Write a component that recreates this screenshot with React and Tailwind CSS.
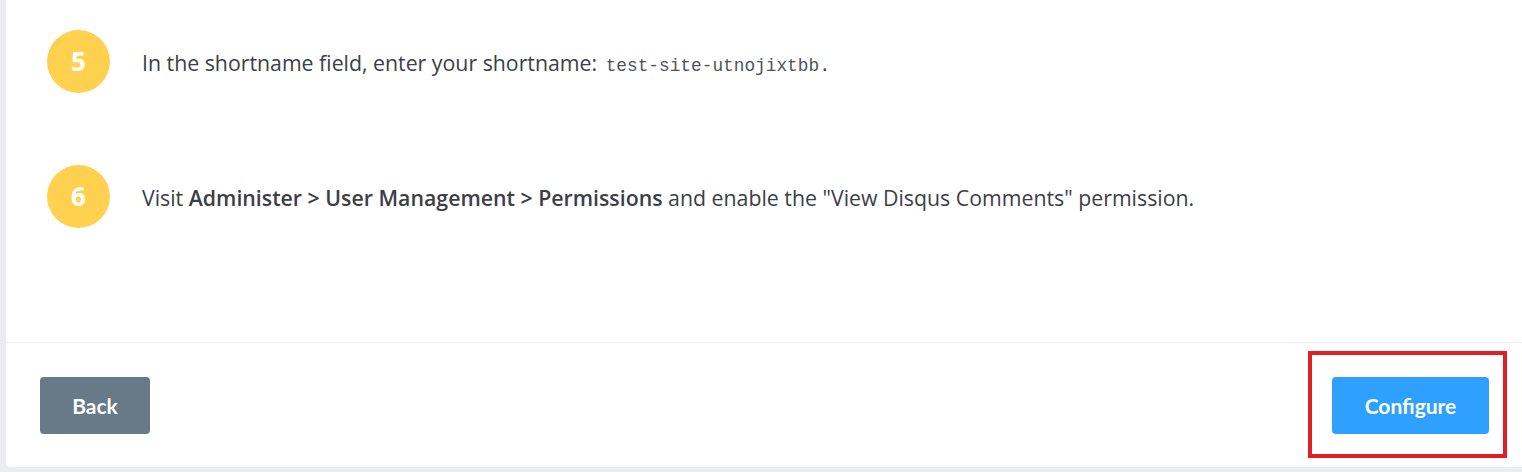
export default function App() {
  const font = { fontFamily: "'Open Sans', Lato, sans-serif" };
  return (
    <div className="relative h-[472px] w-[1522px] overflow-hidden bg-[#e9ecf0] pl-[6px]" style={font}>
      <div className="flex h-[467px] flex-col rounded-bl-[4px] bg-white">
        <div className="flex flex-col gap-[72px] pl-[41px] pt-[30px] pb-[114px]">
          <div className="flex items-center gap-[32px]">
            <div className="flex h-[63px] w-[63px] shrink-0 items-center justify-center rounded-full bg-[#ffd14f] text-[26px] font-bold text-white">5</div>
            <p className="pt-[3px] text-[21.3px] text-[#3c4046]">
              In the shortname field, enter your shortname:{" "}
              <code className="px-[3px] text-[17.8px] text-[#505459]" style={{ fontFamily: "'Liberation Mono', monospace" }}>test-site-utnojixtbb</code>.
            </p>
          </div>
          <div className="flex items-center gap-[32px]">
            <div className="flex h-[63px] w-[63px] shrink-0 items-center justify-center rounded-full bg-[#ffd14f] text-[26px] font-bold text-white">6</div>
            <p className="pt-[2px] text-[21.3px] text-[#3c4046]">
              Visit <b className="font-semibold">Administer &gt; User Management &gt; Permissions</b> and enable the "View Disqus Comments" permission.
            </p>
          </div>
        </div>
        <div className="flex items-center justify-between border-t border-[#eceef1] pl-[34px] pr-[33px] pt-[34px] pb-[33px]" style={{ fontFamily: "Lato, sans-serif" }}>
          <button className="h-[57px] w-[110px] rounded-[4px] bg-[#687987] text-[21px] font-bold text-white">Back</button>
          <button className="h-[57px] w-[157px] rounded-[4px] bg-[#2ea0ff] text-[21px] font-bold text-white">Configure</button>
        </div>
      </div>
      <div className="absolute left-[1308px] top-[351px] h-[107px] w-[199px] border-[4px] border-[#e11f26]"></div>
    </div>
  );
}
